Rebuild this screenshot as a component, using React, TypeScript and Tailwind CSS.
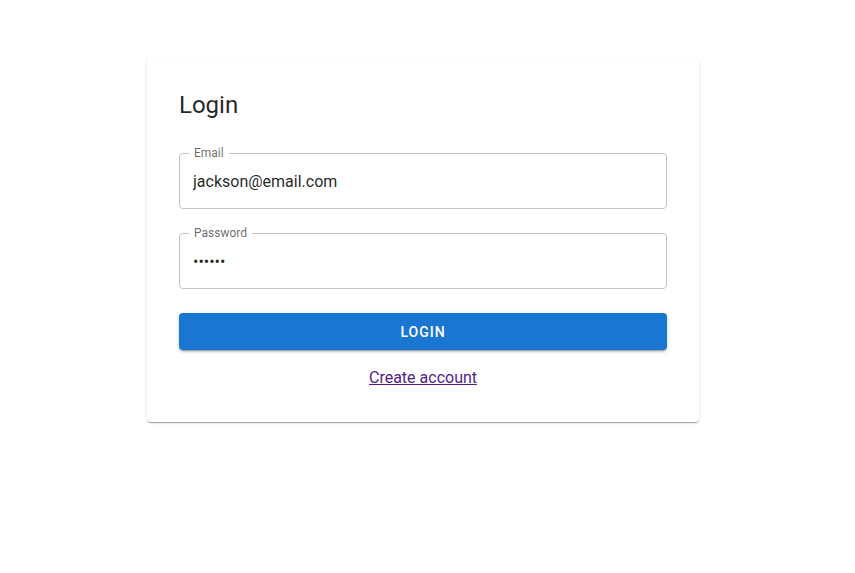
import React from 'react';

const Field: React.FC<{ label: string; type?: string; value: string }> = ({ label, type = 'text', value }) => (
  <div className="relative mt-4 mb-2 h-14 rounded border border-[#c4c4c4]">
    <span className="absolute -top-[8px] left-[9px] bg-white px-[5px] text-xs leading-[14px] text-black/60">
      {label}
    </span>
    <input
      type={type}
      value={value}
      readOnly
      className="h-full w-full rounded bg-transparent px-[13px] text-base text-black/[0.87] outline-none"
    />
  </div>
);

export default function App() {
  return (
    <div className="min-h-screen bg-white font-['Roboto',sans-serif]">
      <div className="ml-[147px] pt-[57px]">
        <div className="flex w-[552px] flex-col rounded bg-white p-8 shadow-[0px_2px_1px_-1px_rgba(0,0,0,0.2),0px_1px_1px_0px_rgba(0,0,0,0.14),0px_1px_3px_0px_rgba(0,0,0,0.12)]">
          <h5 className="mb-4 text-2xl leading-8 text-black/[0.87]">Login</h5>
          <Field label="Email" value="jackson@email.com" />
          <Field label="Password" type="password" value="secret" />
          <button
            type="button"
            className="mt-4 h-[37px] w-full rounded bg-[#1976d2] text-sm font-medium uppercase tracking-[1px] text-white shadow-[0px_3px_1px_-2px_rgba(0,0,0,0.2),0px_2px_2px_0px_rgba(0,0,0,0.14),0px_1px_5px_0px_rgba(0,0,0,0.12)]"
          >
            Login
          </button>
          <div className="mt-4 text-center leading-6">
            <a href="#" className="text-base text-[#551a8b] underline">
              Create account
            </a>
          </div>
        </div>
      </div>
    </div>
  );
}
